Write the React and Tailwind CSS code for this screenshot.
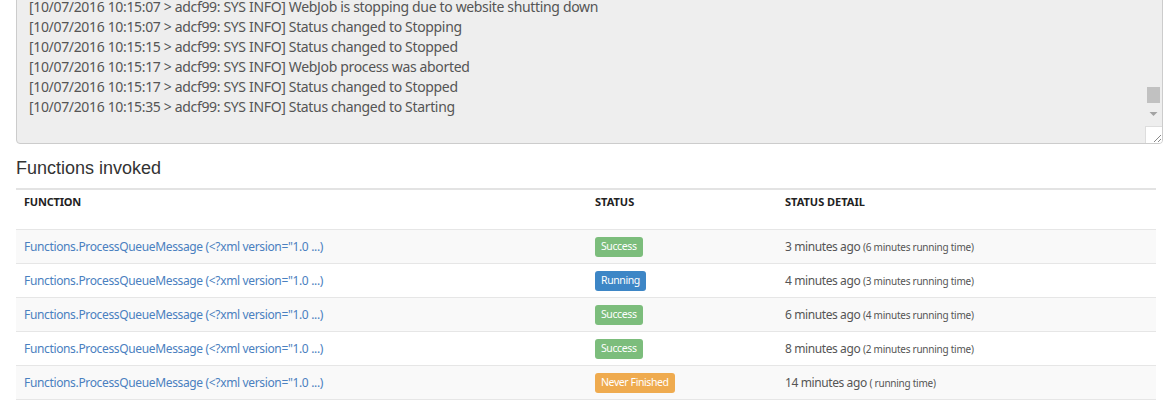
import React from "react";

const logLines = [
  "[10/07/2016 10:15:07 > adcf99: SYS INFO] WebJob is stopping due to website shutting down",
  "[10/07/2016 10:15:07 > adcf99: SYS INFO] Status changed to Stopping",
  "[10/07/2016 10:15:15 > adcf99: SYS INFO] Status changed to Stopped",
  "[10/07/2016 10:15:17 > adcf99: SYS INFO] WebJob process was aborted",
  "[10/07/2016 10:15:17 > adcf99: SYS INFO] Status changed to Stopped",
  "[10/07/2016 10:15:35 > adcf99: SYS INFO] Status changed to Starting",
];

const rows = [
  { status: "Success", ago: "3 minutes ago", run: "(6 minutes running time)" },
  { status: "Running", ago: "4 minutes ago", run: "(3 minutes running time)" },
  { status: "Success", ago: "6 minutes ago", run: "(4 minutes running time)" },
  { status: "Success", ago: "8 minutes ago", run: "(2 minutes running time)" },
  { status: "Never Finished", ago: "14 minutes ago", run: "( running time)" },
];

const badgeClass = {
  Success: "bg-[#7cbd7c]",
  Running: "bg-[#3d86c6]",
  "Never Finished": "bg-[#efab4f]",
};

const StatusBadge = ({ status }) => (
  <span
    className={`flex h-[20px] items-center rounded-[3px] px-[6px] text-[10.5px] tracking-[-0.4px] text-white ${badgeClass[status]}`}
  >
    {status}
  </span>
);

const App = () => {
  return (
    <div
      className="h-[404px] w-[1174px] overflow-hidden bg-white px-4"
      style={{ fontFamily: "'Noto Sans', 'Open Sans', sans-serif" }}
    >
      {/* log box */}
      <div className="relative -mt-[10px] h-[154px] w-[1147px] overflow-hidden rounded-[4px] border border-[#cccccc] bg-[#eeeeee]">
        <div className="flex flex-col pl-3 pt-[6px] text-[14px] leading-[20px] tracking-[-0.34px] text-[#555555]">
          {logLines.map((line, i) => (
            <div key={i} className="whitespace-nowrap">
              {line}
            </div>
          ))}
        </div>
        {/* scrollbar */}
        <div className="absolute right-0 top-0 flex h-full w-[17px] flex-col items-center justify-end">
          <div className="mb-[8px] h-[16px] w-[13px] bg-[#c1c1c1]" />
          <svg width="9" height="6" viewBox="0 0 9 6" className="mb-[9px]">
            <path d="M0.5 1 L8.5 1 L4.5 5 Z" fill="#a3a3a3" />
          </svg>
          <div className="relative h-[17px] w-[17px] border-l border-t border-[#dddddd] bg-white">
            <svg width="17" height="17" viewBox="0 0 17 17" className="absolute left-0 top-0">
              <path d="M15 8 L8 15 M15 12 L12 15" stroke="#888" strokeWidth="1" />
            </svg>
          </div>
        </div>
      </div>

      <h3
        className="mt-[14px] text-[18px] leading-[20px] text-[#333333]"
        style={{ fontFamily: "'Liberation Sans', Arial, sans-serif" }}
      >
        Functions invoked
      </h3>

      <table className="mt-[10px] w-[1140px] border-collapse">
        <thead>
          <tr className="border-t-2 border-[#e3e3e3]">
            <th className="w-[571px] px-2 pb-[21px] pt-[5px] text-left text-[11px] font-bold leading-[13px] tracking-[-0.2px] text-[#222222]">
              FUNCTION
            </th>
            <th className="w-[190px] px-2 pb-[21px] pt-[5px] text-left text-[11px] font-bold leading-[13px] text-[#222222]">
              STATUS
            </th>
            <th className="px-2 pb-[21px] pt-[5px] text-left text-[11px] font-bold leading-[13px] text-[#222222]">
              STATUS DETAIL
            </th>
          </tr>
        </thead>
        <tbody>
          {rows.map((row, i) => (
            <tr
              key={i}
              className={`h-[34px] border-t border-[#e6e6e6] ${i % 2 === 0 ? "bg-[#f9f9f9]" : "bg-white"} ${i === rows.length - 1 ? "border-b" : ""}`}
            >
              <td className="px-2 align-middle text-[12px] tracking-[-0.35px] text-[#4a80c0]">
                Functions.ProcessQueueMessage (&lt;?xml version="1.0 ...)
              </td>
              <td className="px-2 align-middle">
                <div className="flex">
                  <StatusBadge status={row.status} />
                </div>
              </td>
              <td className="px-2 align-middle text-[12px] tracking-[-0.4px] text-[#555555]">
                {row.ago}{" "}
                <span className="text-[10px] tracking-[-0.25px]">{row.run}</span>
              </td>
            </tr>
          ))}
        </tbody>
      </table>
    </div>
  );
};

export default App;
